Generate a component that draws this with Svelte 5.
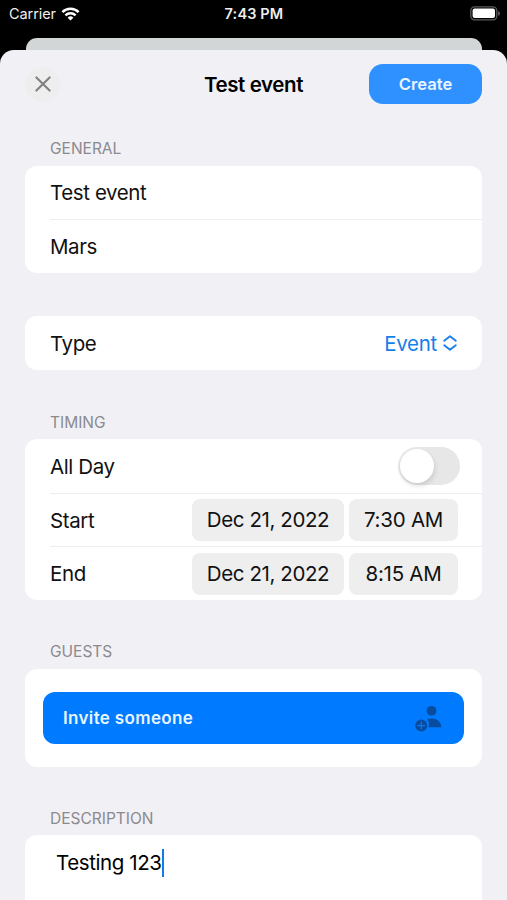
<script lang="ts">
	let title = $state('Test event');
	let location = $state('Mars');
	let allDay = $state(false);
	let description = $state('Testing 123');

	const times = [
		{ label: 'Start', date: 'Dec 21, 2022', time: '7:30 AM' },
		{ label: 'End', date: 'Dec 21, 2022', time: '8:15 AM' }
	];
</script>

<div class="screen">
	<div class="status-bar">
		<div class="carrier">
			<span>Carrier</span>
			<svg width="19" height="14" viewBox="0 0 18 14" fill="none" stroke="#fff" stroke-width="2.5">
				<path d="M0.9 5.1a11.6 11.6 0 0 1 16.2 0" />
				<path d="M3.9 8.3a7.4 7.4 0 0 1 10.2 0" />
				<path d="M9 13.6 6.1 10.7a4.2 4.2 0 0 1 5.8 0Z" fill="#fff" stroke="none" />
			</svg>
		</div>
		<span class="clock">7:43 PM</span>
		<svg class="battery" width="31" height="15" viewBox="0 0 31 15">
			<rect x="0.8" y="0.8" width="26" height="13" rx="3.8" fill="none" stroke="#5c5c5c" stroke-width="1.3" />
			<rect x="2.6" y="2.6" width="22.4" height="9.4" rx="2" fill="#fff" />
			<path d="M28.2 5v4.8c1-.4 1.7-1.3 1.7-2.4s-.7-2-1.7-2.4Z" fill="#666" />
		</svg>
	</div>

	<div class="back-sheet"></div>

	<main class="sheet">
		<header>
			<button class="close" aria-label="Close">
				<svg width="16" height="16" viewBox="0 0 16 16" stroke="#808083" stroke-width="2.1" stroke-linecap="round">
					<path d="M1.4 1.4 14.6 14.6M14.6 1.4 1.4 14.6" />
				</svg>
			</button>
			<h1>{title}</h1>
			<button class="create">Create</button>
		</header>

		<h2>GENERAL</h2>
		<section class="card">
			<div class="row">{title}</div>
			<div class="row">{location}</div>
		</section>

		<section class="card type">
			<div class="row">
				<span>Type</span>
				<button class="picker">
					Event
					<svg width="14" height="16" viewBox="0 0 14 16" fill="none" stroke="currentColor" stroke-width="1.8" stroke-linecap="round" stroke-linejoin="round">
						<path d="M1.2 5.8 7 1.2 12.8 5.8M1.2 10.2 7 14.8 12.8 10.2" />
					</svg>
				</button>
			</div>
		</section>

		<h2>TIMING</h2>
		<section class="card">
			<div class="row">
				<span>All Day</span>
				<button class="toggle" class:on={allDay} aria-label="All Day" onclick={() => (allDay = !allDay)}>
					<span class="knob"></span>
				</button>
			</div>
			{#each times as item}
				<div class="row">
					<span>{item.label}</span>
					<div class="chips">
						<span class="chip date">{item.date}</span>
						<span class="chip time">{item.time}</span>
					</div>
				</div>
			{/each}
		</section>

		<h2>GUESTS</h2>
		<section class="card guests">
			<button class="invite">
				<span>Invite someone</span>
				<svg width="27" height="27" viewBox="0 0 27 27" fill="#084c9f">
					<circle cx="16.5" cy="5.8" r="4.9" />
					<path d="M12 14.6c1.3-.8 2.8-1.1 4.6-1.1 5.2 0 9.4 3 9.8 8.7H13.3a7 7 0 0 0-1.3-7.6Z" />
					<circle cx="6.3" cy="20.6" r="6" />
					<path d="M6.3 17.2v6.8M2.9 20.6h6.8" stroke="#0879f4" stroke-width="1.2" stroke-linecap="round" />
				</svg>
			</button>
		</section>

		<h2>DESCRIPTION</h2>
		<section class="card description">
			<span>{description}</span><i class="caret"></i>
		</section>
	</main>
</div>

<style>
	:global(body) {
		background: #000;
	}

	.screen {
		display: flex;
		flex-direction: column;
		height: 900px;
		overflow: hidden;
		background: #000;
		color: #111;
		font-family: Inter, 'Liberation Sans', sans-serif;
	}

	button {
		padding: 0;
		border: 0;
		background: none;
		font: inherit;
		color: inherit;
		letter-spacing: inherit;
	}

	svg {
		display: block;
	}

	/* Status bar */
	.status-bar {
		display: grid;
		grid-template-columns: 1fr auto 1fr;
		align-items: center;
		height: 27px;
		margin-bottom: 11px;
		padding: 0 6px 0 9px;
		color: #eee;
		font-size: 14.5px;
	}

	.carrier {
		display: flex;
		align-items: center;
		gap: 5.5px;
		letter-spacing: -0.08px;
	}

	.clock {
		margin-right: 2px;
		font-weight: 600;
		letter-spacing: 0.15px;
	}

	.battery {
		justify-self: end;
	}

	/* Sheets */
	.back-sheet {
		flex: none;
		height: 12px;
		margin: 0 25px 0 26px;
		border-radius: 11px 11px 0 0;
		background: #d3d6d7;
	}

	.sheet {
		flex: 1;
		min-height: 0;
		padding: 0 25px;
		border-radius: 14px 14px 0 0;
		background: #f1f0f5;
	}

	header {
		display: grid;
		grid-template-columns: 1fr auto 1fr;
		align-items: center;
		height: 68px;
	}

	.close {
		display: grid;
		place-items: center;
		width: 35px;
		height: 35px;
		border-radius: 50%;
		background: #eeeeef;
	}

	h1 {
		margin: 0;
		color: #000;
		font-size: 20.5px;
		font-weight: 600;
		letter-spacing: -0.4px;
	}

	.create {
		justify-self: end;
		width: 113px;
		height: 40px;
		border-radius: 14px;
		background: #2f91ff;
		color: #e9f4ff;
		font-size: 16.6px;
		font-weight: 600;
	}

	h2 {
		height: 20px;
		margin: 21px 25px 6.5px;
		color: #8a8a8f;
		font-size: 15.5px;
		font-weight: 400;
		line-height: 20px;
	}

	/* Cards */
	.card {
		margin-bottom: 44px;
		border-radius: 12px;
		background: #fff;
		font-size: 20.5px;
		letter-spacing: -0.4px;
	}

	.row {
		display: flex;
		align-items: center;
		justify-content: space-between;
		box-sizing: border-box;
		height: 53.7px;
		margin-left: 25px;
		padding: 1px 25px 0 0;
	}

	.row + .row {
		padding-top: 0;
		border-top: 1.5px solid #efeff0;
	}

	.type {
		margin-top: -0.5px;
		margin-bottom: 44.5px;
	}

	.type .row {
		padding-top: 0;
	}

	.card + h2 {
		margin-top: -2px;
	}

	.picker {
		display: flex;
		align-items: center;
		gap: 6px;
		color: #167fe9;
		letter-spacing: -0.3px;
	}

	.toggle {
		width: 62px;
		height: 38px;
		margin-right: -3px;
		padding: 2px;
		border-radius: 19px;
		background: #e7e7e8;
	}

	.knob {
		display: block;
		width: 34px;
		height: 34px;
		border-radius: 50%;
		background: #fff;
		box-shadow: 1px 3px 5px rgba(0, 0, 0, 0.12);
		transition: transform 0.2s;
	}

	.toggle.on {
		background: #34c759;
	}

	.toggle.on .knob {
		transform: translateX(24px);
	}

	.chips {
		display: flex;
		gap: 5px;
		margin-right: -1px;
	}

	.chip {
		height: 42px;
		border-radius: 8px;
		background: #eeeeef;
		line-height: 42px;
		text-align: center;
	}

	.date {
		width: 152px;
	}

	.time {
		width: 109px;
		letter-spacing: -0.25px;
	}

	.guests {
		padding: 23px 18px;
	}

	.invite {
		display: flex;
		align-items: center;
		justify-content: space-between;
		width: 100%;
		height: 52px;
		padding: 1px 22px 0 20px;
		border-radius: 12px;
		background: #007aff;
		color: #e9f5ff;
		font-size: 17px;
		font-weight: 600;
		letter-spacing: 0.35px;
	}

	.description {
		display: flex;
		align-items: center;
		height: 55px;
		margin-bottom: 0;
		padding: 0 31px 60px;
		color: #000;
	}

	.caret {
		width: 2.5px;
		height: 28px;
		background: #1679e8;
	}
</style>
